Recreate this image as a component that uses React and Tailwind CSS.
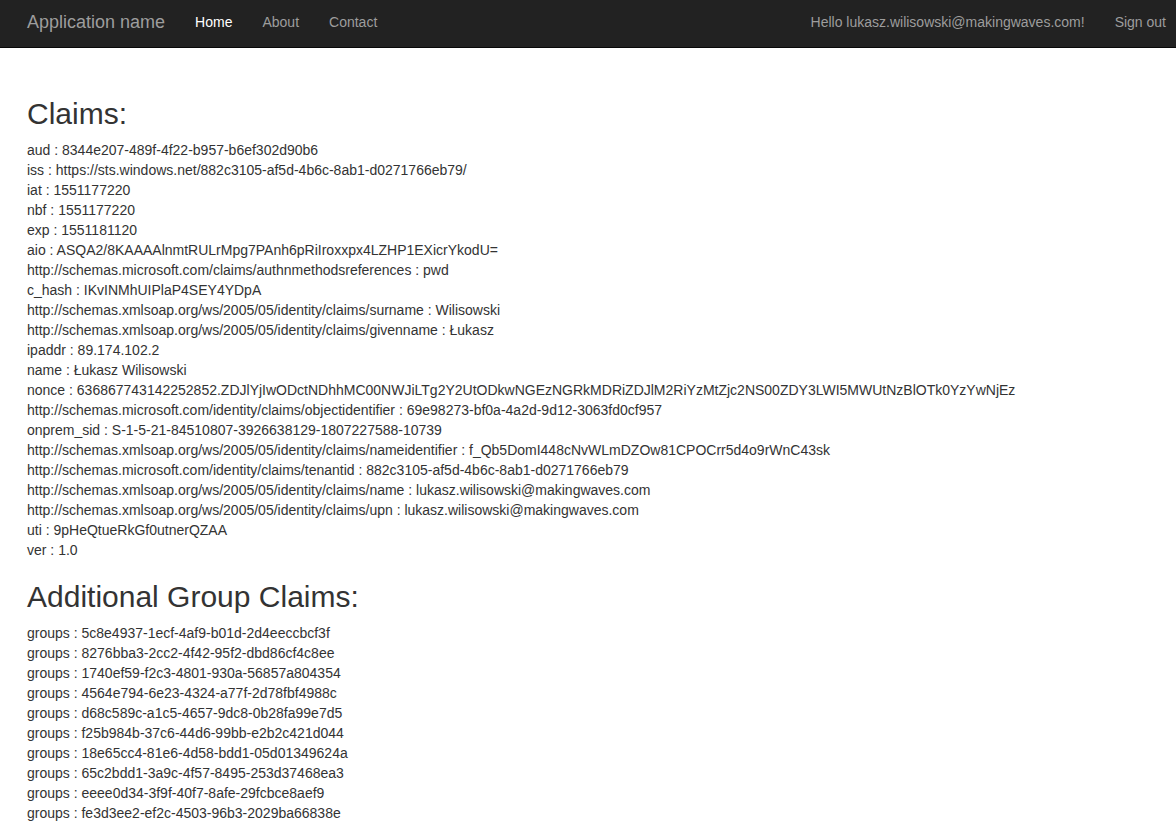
import React from 'react';

const claims = [
  ['aud', '8344e207-489f-4f22-b957-b6ef302d90b6'],
  ['iss', 'https://sts.windows.net/882c3105-af5d-4b6c-8ab1-d0271766eb79/'],
  ['iat', '1551177220'],
  ['nbf', '1551177220'],
  ['exp', '1551181120'],
  ['aio', 'ASQA2/8KAAAAlnmtRULrMpg7PAnh6pRiIroxxpx4LZHP1EXicrYkodU='],
  ['http://schemas.microsoft.com/claims/authnmethodsreferences', 'pwd'],
  ['c_hash', 'IKvINMhUIPlaP4SEY4YDpA'],
  ['http://schemas.xmlsoap.org/ws/2005/05/identity/claims/surname', 'Wilisowski'],
  ['http://schemas.xmlsoap.org/ws/2005/05/identity/claims/givenname', 'Łukasz'],
  ['ipaddr', '89.174.102.2'],
  ['name', 'Łukasz Wilisowski'],
  ['nonce', '636867743142252852.ZDJlYjIwODctNDhhMC00NWJiLTg2Y2UtODkwNGEzNGRkMDRiZDJlM2RiYzMtZjc2NS00ZDY3LWI5MWUtNzBlOTk0YzYwNjEz'],
  ['http://schemas.microsoft.com/identity/claims/objectidentifier', '69e98273-bf0a-4a2d-9d12-3063fd0cf957'],
  ['onprem_sid', 'S-1-5-21-84510807-3926638129-1807227588-10739'],
  ['http://schemas.xmlsoap.org/ws/2005/05/identity/claims/nameidentifier', 'f_Qb5DomI448cNvWLmDZOw81CPOCrr5d4o9rWnC43sk'],
  ['http://schemas.microsoft.com/identity/claims/tenantid', '882c3105-af5d-4b6c-8ab1-d0271766eb79'],
  ['http://schemas.xmlsoap.org/ws/2005/05/identity/claims/name', 'lukasz.wilisowski@makingwaves.com'],
  ['http://schemas.xmlsoap.org/ws/2005/05/identity/claims/upn', 'lukasz.wilisowski@makingwaves.com'],
  ['uti', '9pHeQtueRkGf0utnerQZAA'],
  ['ver', '1.0'],
];

const groups = [
  '5c8e4937-1ecf-4af9-b01d-2d4eeccbcf3f',
  '8276bba3-2cc2-4f42-95f2-dbd86cf4c8ee',
  '1740ef59-f2c3-4801-930a-56857a804354',
  '4564e794-6e23-4324-a77f-2d78fbf4988c',
  'd68c589c-a1c5-4657-9dc8-0b28fa99e7d5',
  'f25b984b-37c6-44d6-99bb-e2b2c421d044',
  '18e65cc4-81e6-4d58-bdd1-05d01349624a',
  '65c2bdd1-3a9c-4f57-8495-253d37468ea3',
  'eeee0d34-3f9f-40f7-8afe-29fcbce8aef9',
  'fe3d3ee2-ef2c-4503-96b3-2029ba66838e',
];

const App = () => {
  return (
    <div className="min-h-screen bg-white text-[#333] text-[14px] leading-[20px] font-['Liberation_Sans',Arial,sans-serif] overflow-hidden">
      <nav className="h-[48px] bg-[#222] border-b border-[#080808] flex items-start pl-[12px] pt-[12px] whitespace-nowrap">
        <a href="#" className="px-[15px] text-[18px] leading-[20px] text-[#9d9d9d]">Application name</a>
        <ul className="flex">
          <li><a href="#" className="px-[15px] text-white">Home</a></li>
          <li><a href="#" className="px-[15px] text-[#9d9d9d]">About</a></li>
          <li><a href="#" className="px-[15px] text-[#9d9d9d]">Contact</a></li>
        </ul>
        <ul className="ml-auto flex mr-[-5px]">
          <li><a href="#" className="px-[15px] text-[#9d9d9d]">Hello lukasz.wilisowski@makingwaves.com!</a></li>
          <li><a href="#" className="px-[15px] text-[#9d9d9d]">Sign out</a></li>
        </ul>
      </nav>

      <main className="pl-[27px] pt-[49px] whitespace-nowrap">
        <h2 className="text-[30px] leading-[33px] font-medium mb-[10px]">Claims:</h2>
        <div>
          {claims.map(([k, v]) => (
            <div key={k}>{k} : {v}</div>
          ))}
        </div>

        <h2 className="text-[30px] leading-[33px] font-medium mt-[20px] mb-[10px]">Additional Group Claims:</h2>
        <div>
          {groups.map((g) => (
            <div key={g}>groups : {g}</div>
          ))}
        </div>
      </main>
    </div>
  );
};

export default App;
